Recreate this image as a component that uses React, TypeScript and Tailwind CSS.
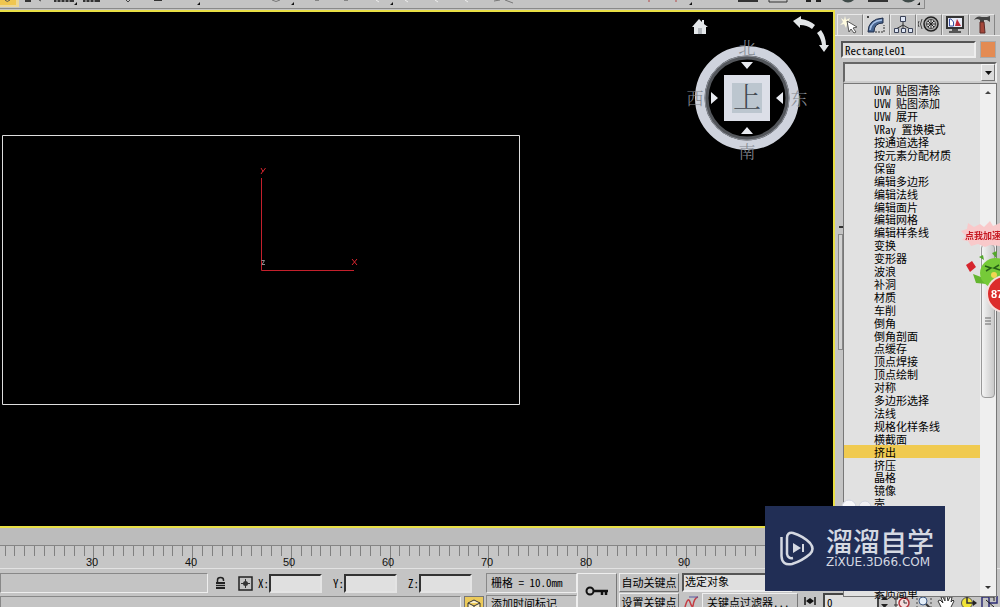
import type { ReactNode } from "react";

const modifiers = [
  "UVW 贴图清除",
  "UVW 贴图添加",
  "UVW 展开",
  "VRay 置换模式",
  "按通道选择",
  "按元素分配材质",
  "保留",
  "编辑多边形",
  "编辑法线",
  "编辑面片",
  "编辑网格",
  "编辑样条线",
  "变换",
  "变形器",
  "波浪",
  "补洞",
  "材质",
  "车削",
  "倒角",
  "倒角剖面",
  "点缓存",
  "顶点焊接",
  "顶点绘制",
  "对称",
  "多边形选择",
  "法线",
  "规格化样条线",
  "横截面",
  "挤出",
  "挤压",
  "晶格",
  "镜像",
  "壳",
];

// half-width Latin, two letters to one CJK cell
const half = "[font-feature-settings:'hwid']";

function Toolbar() {
  return (
    <header className="h-[10px] shrink-0 overflow-hidden bg-[#c4c4c4]">
      <div className="mr-[75px] h-[9px] border-r border-b border-[#8a8a8a]">
        <svg className="h-[8px] w-[925px]" viewBox="0 0 925 8" aria-hidden="true">
          <path d="M0 0H19V7H0Z" fill="#edd795" />
          <path d="M0 0H16V5H0Z" fill="#f0c650" />
          <path d="M5 0Q7 3 10 0" stroke="#555" fill="none" />
          <path d="M25 1H31M54 1H74M83 1H100M154 0H162M738 1H758M868 1H888" stroke="#333" strokeWidth="2" />
          <path d="M57 0V3M61 0V3M65 0V3M69 0V3M86 0V3M90 0V3M94 0V3" stroke="#c4c4c4" />
          <path d="M126 0L128 2L130 0M39 0L41 1M315 0H319M344 0H348" stroke="#444" fill="none" />
          <path d="M272 0Q276 3 280 0M494 1L500 0M505 0L513 3" stroke="#777" fill="none" />
          <path d="M376 0L379 2M405 0L408 2M435 0L438 2M465 0L468 2" stroke="#eee" />
          <path d="M649 0V2M676 0V2" stroke="#b34848" />
          <path d="M769 0V2H787V0" stroke="#333" fill="none" />
          <path d="M806 0H811V2H806ZM816 0H821V2H816Z" fill="#222" />
          <path d="M842 0Q848 5 854 0ZM902 0Q908 5 915 0Z" fill="#3f4a48" />
          <path d="M74 5L77 2V5ZM197 5L200 2V5ZM291 5L294 2V5ZM390 5L393 2V5ZM689 5L692 2V5ZM917 5L920 2V5Z" fill="#111" />
        </svg>
      </div>
    </header>
  );
}

function ViewCube() {
  return (
    <svg
      className="absolute top-1 right-0 h-[155px] w-[150px] font-['Noto_Serif_CJK_SC','Noto_Sans_CJK_SC',serif]"
      viewBox="683 16 150 155"
      role="img"
      aria-label="ViewCube"
    >
      <path d="M692 27L699 19L702 22V20H704V24L708 27H706V34H694V27Z" fill="#e4e7ea" />
      <path d="M698 28H702V34H698Z" fill="#b4b9be" />
      <circle cx="747" cy="98" r="47" fill="none" stroke="#cfd3dd" strokeWidth="10" />
      <circle cx="747" cy="98" r="40.5" fill="none" stroke="#53565b" strokeWidth="4" />
      <circle cx="747" cy="98" r="42" fill="none" stroke="#8a8e96" strokeWidth="1" />
      <path d="M724 75H770V121H724Z" fill="#dcdfe8" />
      <path d="M732 83H762V113H732Z" fill="#bcc6cf" />
      <path d="M741 62H753L747 69ZM741 134H753L747 127ZM711 92V104L718 98ZM783 92V104L776 98Z" fill="#e8eaf0" />
      <text x="747" y="108" textAnchor="middle" fontSize="28" fontWeight="300" fill="#42484f">
        上
      </text>
      <g fill="#858a92" fontSize="17" fontWeight="300" textAnchor="middle">
        <text x="747" y="54">北</text>
        <text x="747" y="158">南</text>
        <text x="695" y="105">西</text>
        <text x="799" y="105">东</text>
      </g>
      <path d="M793 21L801 16V19Q809 20 815 25L812 29Q807 25 800 25V28Z" fill="#e3e6e8" />
      <path d="M817 33L821 30Q826 37 826 45H829L824 52L819 45H822Q821 38 817 33Z" fill="#e3e6e8" />
    </svg>
  );
}

function Viewport() {
  return (
    <main className="relative min-h-0 flex-1 overflow-hidden border-y-2 border-r-2 border-[#e9df45] bg-black">
      <svg className="absolute top-0 left-0 h-[500px] w-[600px]" viewBox="0 12 600 500" aria-label="Rectangle01">
        <path d="M2.5 135.5H519.5V404.5H2.5Z" fill="none" stroke="#dedede" />
        <path d="M261.5 178V270.5H354" fill="none" stroke="#c4202c" />
        <path d="M261 168L263 171.500L265.500 168M263 171L261 174" fill="none" stroke="#d8252f" />
        <path d="M352 259L357 265M357 259L352 265" stroke="#d8252f" />
        <path d="M261.5 260.5H264.5L262 264.5H265" fill="none" stroke="#8d8d8d" />
      </svg>
      <ViewCube />
    </main>
  );
}

function TrackBar() {
  const step = 9.87;
  const frames = Array.from({ length: 84 }, (_, i) => i);
  return (
    <div className="h-[40px] shrink-0 bg-[#bcbcbc] pt-[17px]">
      <svg className="block h-[23px] w-full border-t border-[#858585] bg-[#c6c6c6]" aria-label="时间轴">
        {frames.map((n) => {
          const x = Math.round(4.6 + n * step) + 0.5;
          const major = n % 10 === 9;
          return <path key={n} d={major ? `M${x} 0V23` : `M${x} 0V10`} stroke="#808080" />;
        })}
        {[30, 40, 50, 60, 70, 80, 90].map((n) => (
          <text
            key={n}
            x={Math.round(92 + (n - 30) * step)}
            y="20"
            textAnchor="middle"
            className="fill-[#111] font-['Liberation_Sans',sans-serif] text-[11px]"
          >
            {n}
          </text>
        ))}
      </svg>
    </div>
  );
}

function Tab({ label, active, children }: { label: string; active?: boolean; children: ReactNode }) {
  return (
    <button
      type="button"
      aria-label={label}
      className={`flex h-[21px] flex-1 items-start justify-center border-t border-r border-l border-t-[#e8e8e8] border-l-[#e8e8e8] border-r-[#858585] ${active ? "bg-[#d6d6d6]" : ""}`}
    >
      <svg className="h-[20px] w-[22px]" viewBox="0 0 22 20" aria-hidden="true">
        {children}
      </svg>
    </button>
  );
}

function PanelTabs() {
  return (
    <nav className="flex border-b border-[#ededed] pr-[5px] pl-[2px]">
      <Tab label="创建">
        <path d="M6 1L7 5L11 3L9 7L13 9L8 9L7 13L5 9L1 10L4 7L2 3L5 5Z" fill="#fffbe0" />
        <path d="M8 6L18 12L14 13L17 17L15 18L12 14L10 17Z" fill="#fff" stroke="#555" />
      </Tab>
      <Tab label="修改" active>
        <path d="M3 17Q3 4 18 3V8Q9 8 9 17Z" fill="#47648f" stroke="#1e2c48" />
        <path d="M5 15Q6 6 17 5" stroke="#a9c3e8" strokeWidth="1.5" fill="none" />
        <path d="M10 17H19V10" stroke="#333" strokeDasharray="2 1" fill="none" />
        <path d="M2 1H4V3H2Z" fill="#444" />
      </Tab>
      <Tab label="层次">
        <path d="M11 6V10M11 10L4 14M11 10V14M11 10L18 14" stroke="#333" fill="none" />
        <path d="M8.500 1.500H13.500V6.500H8.500ZM2.500 13.500H6.500V17.500H2.500ZM9.500 13.500H13.500V17.500H9.500ZM16.500 13.500H20.500V17.500H16.500Z" fill="#dfe7f6" stroke="#3b4257" />
      </Tab>
      <Tab label="运动">
        <circle cx="13" cy="9" r="7" fill="#aaa" stroke="#222" strokeWidth="1.500" />
        <circle cx="13" cy="9" r="4.500" fill="#ddd" stroke="#444" />
        <path d="M9 9H17M13 5V13M10 6L16 12M16 6L10 12" stroke="#222" />
        <path d="M4 4Q1 9 4 14M1 6Q-1 9 1 12" stroke="#444" fill="none" />
      </Tab>
      <Tab label="显示">
        <path d="M2 1H20V14H2Z" fill="#333" />
        <path d="M4 3H18V12H4Z" fill="#e9ecf8" />
        <path d="M5.500 4V11H9.500V7L7 4Z" fill="#fff" stroke="#3a4fa0" />
        <path d="M11 11L13 4L17 11Z" fill="#c22a37" />
        <path d="M8 14H14V16H17V18H5V16H8Z" fill="#555" />
      </Tab>
      <Tab label="工具">
        <path d="M3 5Q6 0 11 2H16L19 1V7L16 5H13V7H9V5Q6 3 3 5Z" fill="#444" />
        <path d="M9 7H13L14 18H9Z" fill="#a4473b" stroke="#5e2a26" />
      </Tab>
    </nav>
  );
}

function ModifierList() {
  return (
    <div className="absolute top-full left-0 z-10 flex h-[514px] w-full border border-[#777] bg-[#e1e1e1]">
      <ul
        role="listbox"
        aria-label="修改器列表"
        className="grid h-[516px] min-w-0 flex-1 grid-rows-[repeat(40,minmax(0,1fr))]"
      >
        {modifiers.map((name) => (
          <li
            key={name}
            role="option"
            aria-selected={name === "挤出"}
            className={`flex items-center pl-[30px] leading-[12px] whitespace-nowrap ${half} ${name === "挤出" ? "bg-[#f0ca50]" : ""}`}
          >
            {name}
          </li>
        ))}
        <li
          role="option"
          aria-selected="false"
          className="row-start-[40] h-[12px] overflow-hidden pl-[30px] leading-[12px]"
        >
          素质简单
        </li>
      </ul>
      <div className="flex w-[16px] flex-col items-center bg-[#efefef]">
        <svg className="h-[16px] w-[8px]" viewBox="0 0 8 16" aria-hidden="true">
          <path d="M1 10L4 7L7 10Z" fill="#444" />
        </svg>
        <div className="mt-[144px] flex h-[154px] w-[14px] items-center justify-center rounded-sm border border-[#999] bg-linear-to-r from-[#f4f4f4] to-[#c9c9c9]">
          <svg className="h-[8px] w-[6px]" viewBox="0 0 6 8" aria-hidden="true">
            <path d="M0 1H6M0 4H6M0 7H6" stroke="#666" />
          </svg>
        </div>
        <svg className="mt-auto h-[16px] w-[8px]" viewBox="0 0 8 16" aria-hidden="true">
          <path d="M1 6L4 9L7 6Z" fill="#333" />
        </svg>
      </div>
    </div>
  );
}

function CommandPanel() {
  return (
    <aside className="relative flex w-[165px] shrink-0 flex-col bg-[#c4c4c4] pt-[4px]">
      <div className="absolute top-[216px] left-[4px] h-[2px] w-[4px] bg-[#333]" />
      <div className="absolute top-[224px] left-[3px] h-[116px] w-[5px] border border-[#888] bg-[#d2d2d2]" />
      <PanelTabs />
      <div className="mt-[5px] flex gap-1 pr-[4px] pl-[6px]">
        <input
          aria-label="对象名称"
          defaultValue="Rectangle01"
          className={`${half} h-[17px] min-w-0 flex-1 border-2 border-[#555] border-r-[#eee] border-b-[#eee] bg-[#dedede] px-[2px] text-[11px] leading-[13px]`}
        />
        <button type="button" aria-label="对象颜色" className="h-[17px] w-[16px] border border-[#aaa] bg-[#e38b53]" />
      </div>
      <div className="relative mt-1 mr-[3px] ml-[8px]">
        <select
          aria-label="修改器"
          className="block h-[21px] w-full appearance-none border-2 border-[#666] border-r-[#eee] border-b-[#ccc] bg-[#dfdfdf]"
        >
          <option aria-label="修改器列表" />
        </select>
        <span className="pointer-events-none absolute top-[2px] right-[2px] flex h-[17px] w-[14px] items-center justify-center border border-[#f5f5f5] border-r-[#777] border-b-[#777] bg-[#dcdcdc]">
          <svg className="h-[4px] w-[7px]" viewBox="0 0 7 4" aria-hidden="true">
            <path d="M0 0H7L3.500 4Z" fill="#111" />
          </svg>
        </span>
        <ModifierList />
      </div>
    </aside>
  );
}

function Coordinate({ axis }: { axis: string }) {
  return (
    <label className="flex w-[75px] items-center justify-end">
      <span className={`${half} leading-[14px]`}>{axis}:</span>
      <input className="h-[19px] w-[53px] border-2 border-[#333] border-r-[#e4e4e4] border-b-[#e4e4e4] bg-[#e0e0e0]" />
    </label>
  );
}

const inset = "border border-[#888] border-r-[#eee] border-b-[#eee]";
const raised = "border border-[#eee] border-r-[#777] border-b-[#777]";

function NavIcons() {
  return (
    <div className="flex gap-[4px] pl-[4px]">
      <button type="button" aria-label="时间配置">
        <svg className="h-[14px] w-[18px]" viewBox="0 0 18 14">
          <path d="M3 2H14V13H3Z" fill="#eee" stroke="#333" />
          <path d="M1 4H5M1 10H5" stroke="#333" />
          <circle cx="11" cy="8" r="5" fill="#f2dcdc" stroke="#b5343a" strokeWidth="1.500" />
          <path d="M11 5V8H14" stroke="#333" fill="none" />
        </svg>
      </button>
      <button type="button" aria-label="缩放区域">
        <svg className="h-[14px] w-[18px]" viewBox="0 0 18 14">
          <path d="M2 1H16V13H2Z" fill="none" stroke="#444" strokeDasharray="2 2" />
          <circle cx="8" cy="6" r="4" fill="#e3edf7" stroke="#3f5a84" />
          <path d="M11 9L16 14" stroke="#333" strokeWidth="2" />
        </svg>
      </button>
      <button type="button" aria-label="平移">
        <svg className="h-[14px] w-[18px]" viewBox="0 0 18 14">
          <path d="M4 12L1 6L3 5L6 8L4 2H6L8 6L8 1H10L11 6L13 2H15L14 7L16 5L17 6L13 14H6Z" fill="#fff" stroke="#333" />
        </svg>
      </button>
      <button type="button" aria-label="弧形旋转">
        <svg className="h-[14px] w-[18px]" viewBox="0 0 18 14">
          <circle cx="8" cy="8" r="5.500" fill="#f1e436" stroke="#555" />
          <path d="M8 1V8H16" stroke="#333" strokeWidth="1.500" fill="none" />
          <path d="M14 5L18 8L14 11Z" fill="#222" />
        </svg>
      </button>
      <button type="button" aria-label="最大化视口">
        <svg className="h-[14px] w-[18px]" viewBox="0 0 18 14">
          <path d="M1 2H8V14H1ZM8 8H16V1" fill="none" stroke="#2c2c74" strokeWidth="1.500" />
          <path d="M5 5L13 12M9 2H13V6" fill="none" stroke="#222" />
        </svg>
      </button>
    </div>
  );
}

function StatusBar() {
  return (
    <footer className="flex h-[39px] shrink-0 overflow-hidden border-t border-[#e2e2e2] bg-[#c4c4c4] pt-1">
      <div className="w-[484px] shrink-0">
        <div className="flex h-[20px] items-center">
          <div className={`${inset} h-[20px] w-[208px]`} />
          <svg className="ml-[7px] h-[14px] w-[11px]" viewBox="0 0 11 14" aria-label="锁定">
            <path d="M2.500 6V4Q2.500 1.500 5.500 1.500T8.500 4V5" fill="none" stroke="#222" strokeWidth="1.500" />
            <path d="M1 6H10V13H1Z" fill="#222" />
            <path d="M1 8.500H10M1 10.500H10" stroke="#aaa" />
          </svg>
          <svg className="ml-[12px] h-[15px] w-[15px]" viewBox="0 0 15 15" aria-label="坐标模式">
            <path d="M1 1H14V14H1Z" fill="none" stroke="#222" strokeWidth="1.500" />
            <circle cx="7.500" cy="7.500" r="2.500" fill="#333" />
            <path d="M7.500 3V12M3 7.500H12" stroke="#333" />
          </svg>
          <div className="-ml-[6px] flex">
            <Coordinate axis="X" />
            <Coordinate axis="Y" />
            <Coordinate axis="Z" />
          </div>
        </div>
        <div className="mt-[3px] flex justify-between">
          <div className={`${inset} h-[20px] w-[461px]`} />
          <button type="button" aria-label="自适应降级" className="flex h-[20px] w-[20px] justify-center border border-[#777] bg-[#ecca5a] pt-[2px]">
            <svg className="h-[14px] w-[14px]" viewBox="0 0 14 14">
              <path d="M7 1L13 4V11L7 14L1 11V4ZM1 4L7 7L13 4M7 7V14" fill="#f7eecb" stroke="#333" />
            </svg>
          </button>
        </div>
      </div>
      <div className="ml-[2px] w-[91px] shrink-0">
        <div className={`${inset} ${half} h-[20px] pl-1 leading-[16px] whitespace-nowrap`}>栅格 = 10.0mm</div>
        <div className={`${inset} mt-[2px] h-[20px] pl-1 leading-[14px]`}>添加时间标记</div>
      </div>
      <button type="button" aria-label="设置关键点" className={`${raised} flex h-[42px] w-[40px] shrink-0 justify-center pt-[11px]`}>
        <svg className="h-[12px] w-[24px]" viewBox="0 0 24 12">
          <circle cx="5" cy="6" r="3.500" fill="none" stroke="#111" strokeWidth="2" />
          <path d="M9 6H23M17 6V10M21 6V10" stroke="#111" strokeWidth="2.500" />
        </svg>
      </button>
      <div className="ml-[2px] w-[60px] shrink-0">
        <button type="button" className={`${raised} block h-[19px] w-full pb-[2px] leading-[14px]`}>自动关键点</button>
        <button type="button" className={`${raised} mt-px block h-[20px] w-full pb-[2px] leading-[14px]`}>设置关键点</button>
      </div>
      <div className="ml-[3px] min-w-0 flex-1">
        <select
          aria-label="选择集"
          className="block h-[19px] w-[110px] appearance-none border-2 border-[#555] border-r-[#eee] border-b-[#eee] bg-[#dfdfdf] pb-[2px] pl-px text-[11px] leading-[13px]"
        >
          <option>选定对象</option>
        </select>
        <div className="mt-px flex">
          <button type="button" aria-label="切线" className="h-[16px] w-[20px]">
            <svg className="h-[16px] w-[20px]" viewBox="0 0 20 16">
              <path d="M3 14Q6 3 8 9T11 13Q12 5 16 4" fill="none" stroke="#c53c43" strokeWidth="1.500" />
              <path d="M7 4H16" stroke="#5858a0" />
            </svg>
          </button>
          <button type="button" className={`${raised} ${half} h-[18px] w-[96px] pl-1 text-left leading-[14px]`}>
            关键点过滤器...
          </button>
          <button type="button" aria-label="关键点模式" className="ml-px flex h-[16px] w-[22px] justify-center">
            <svg className="h-[16px] w-[12px]" viewBox="0 0 12 14">
              <path d="M1 3V11M11 3V11" stroke="#111" strokeWidth="1.500" />
              <path d="M2 7L6 4V10ZM10 7L6 4V10Z" fill="#111" />
            </svg>
          </button>
          <input
            aria-label="当前帧"
            defaultValue="0"
            className={`${half} ml-[2px] h-[17px] w-[56px] border-2 border-[#444] border-b-[#eee] bg-[#dedede] px-[2px] text-[11px] leading-[13px]`}
          />
          <svg className="mt-[2px] ml-px h-[14px] w-[9px]" viewBox="0 0 9 14" aria-hidden="true">
            <path d="M1 5L4.500 1L8 5ZM1 9L4.500 13L8 9Z" fill="#222" />
          </svg>
          <NavIcons />
        </div>
      </div>
    </footer>
  );
}

function Mascot() {
  return (
    <svg className="fixed top-[220px] right-0 z-20 h-[100px] w-[40px]" viewBox="960 220 40 100" role="img" aria-label="点我加速">
      <path d="M961 231L967 229L968 223L974 227L980 224L984 227L990 221L993 226L1000 223V246L990 245L985 247L978 244L971 246L968 241L962 240L966 236Z" fill="#f9c9ca" />
      <text x="965" y="239" fontSize="9" fontWeight="700" fill="#c61922" className="font-['Noto_Sans_CJK_SC',sans-serif]">
        点我加速
      </text>
      <path d="M966 265L972 261L976 267L970 272Z" fill="#d6252d" />
      <path d="M973 274L981 277L985 274L987 284L976 283Z" fill="#64b52f" />
      <path d="M979 257L983 255L984 260ZM992 253L997 251L996 258Z" fill="#53a82b" />
      <ellipse cx="996" cy="273" rx="16" ry="15" fill="#76ca38" />
      <path d="M985 266L991 268L986 271M999 265L994 268L1000 270" fill="none" stroke="#266016" strokeWidth="1.500" />
      <ellipse cx="994" cy="275" rx="3" ry="3" fill="#f0d652" />
      <circle cx="1005" cy="294" r="19" fill="#f5dedc" />
      <circle cx="1005" cy="294" r="17" fill="#dc2c2b" />
      <text x="991" y="298" fontSize="11" fontWeight="700" fill="#fff" className="font-['Liberation_Sans',sans-serif]">
        87
      </text>
    </svg>
  );
}

function Brand() {
  return (
    <div className="fixed right-[55px] bottom-[16px] z-20 w-[180px]">
      <svg className="absolute -top-[7px] left-[76px] h-[8px] w-[32px]" viewBox="0 0 32 8" aria-hidden="true">
        <circle cx="8" cy="8" r="7" fill="#f8f8fa" stroke="#cfd2de" />
        <circle cx="24" cy="8" r="6" fill="#f0f0f4" stroke="#cfd2de" />
      </svg>
      <div className="relative flex h-[85px] items-center bg-[#212e55] pl-[14px] text-[#d5d9e2]">
        <svg className="h-[38px] w-[36px] shrink-0" viewBox="0 0 36 38" aria-hidden="true">
          <path
            d="M2.500 7V26Q3 36 13 34Q23 31 31 24Q36 19 31 13Q24 6 14 3Q8 2 8 8V24Q9 29 14 28"
            fill="none"
            stroke="currentColor"
            strokeWidth="2.500"
          />
          <path d="M14 13L22 18L14 23ZM23 14H25V22H23Z" fill="currentColor" />
        </svg>
        <div className="ml-[11px]">
          <p className="text-[27px] leading-[26px] font-medium whitespace-nowrap">溜溜自学</p>
          <p className="font-['DejaVu_Sans',sans-serif] text-[12px] leading-[16px] whitespace-nowrap">ZiXUE.3D66.COM</p>
        </div>
      </div>
    </div>
  );
}

export default function App() {
  return (
    <div className="flex h-screen flex-col overflow-hidden bg-[#c4c4c4] font-['Noto_Sans_CJK_SC',sans-serif] text-[11px] text-black">
      <Toolbar />
      <div className="flex min-h-0 flex-1">
        <div className="flex min-w-0 flex-1 flex-col">
          <Viewport />
          <TrackBar />
        </div>
        <CommandPanel />
      </div>
      <StatusBar />
      <Mascot />
      <Brand />
    </div>
  );
}
